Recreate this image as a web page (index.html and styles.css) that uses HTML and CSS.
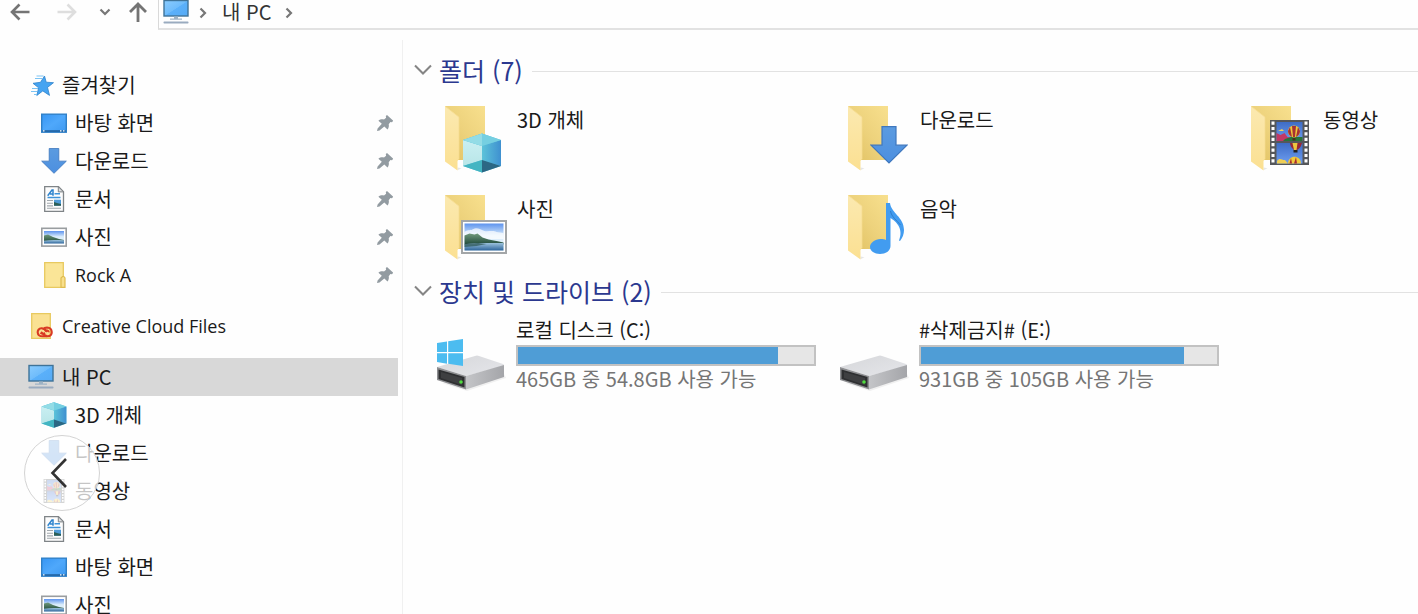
FILE: index.html
```html
<!DOCTYPE html>
<html lang="ko">
<head>
<meta charset="utf-8">
<title>내 PC</title>
<meta name="viewport" content="width=device-width, initial-scale=1">
<link rel="stylesheet" href="styles.css">
</head>
<body>
<svg class="sprite" aria-hidden="true">
  <defs>
    <linearGradient id="g-screen" x1="0" y1="0" x2="1" y2="1"><stop offset="0" stop-color="#8accff"/><stop offset=".5" stop-color="#6fbcfb"/><stop offset=".52" stop-color="#5ab0fa"/><stop offset="1" stop-color="#55aaf5"/></linearGradient>
    <linearGradient id="g-desk" x1="0" y1="0" x2="1" y2="1"><stop offset="0" stop-color="#3796f3"/><stop offset=".5" stop-color="#4fa8fb"/><stop offset="1" stop-color="#3c98f0"/></linearGradient>
    <linearGradient id="g-back" x1="0" y1="1" x2="1" y2="0"><stop offset="0" stop-color="#e0c060"/><stop offset=".5" stop-color="#edd27c"/><stop offset="1" stop-color="#f8e08e"/></linearGradient>
    <linearGradient id="g-flap" x1="0" y1="0" x2="0" y2="1"><stop offset="0" stop-color="#fbe9b0"/><stop offset="1" stop-color="#fbe092"/></linearGradient>
    <linearGradient id="g-arrow" x1="0" y1="0" x2="0" y2="1"><stop offset="0" stop-color="#5b9be0"/><stop offset="1" stop-color="#4c8fe0"/></linearGradient>
    <linearGradient id="g-sky" x1="0" y1="0" x2="0" y2="1"><stop offset="0" stop-color="#5d93ee"/><stop offset=".45" stop-color="#d9ecfb"/><stop offset="1" stop-color="#e8f4fb"/></linearGradient>
    <linearGradient id="g-sea" x1="0" y1="0" x2="0" y2="1"><stop offset="0" stop-color="#9cc3dd"/><stop offset="1" stop-color="#2e659b"/></linearGradient>
    <linearGradient id="g-hill" x1="0" y1="0" x2="0" y2="1"><stop offset="0" stop-color="#719a7c"/><stop offset="1" stop-color="#204a3c"/></linearGradient>
    <linearGradient id="g-cubel" x1="0" y1="0" x2="0" y2="1"><stop offset="0" stop-color="#c9eff2"/><stop offset="1" stop-color="#b9e6e8"/></linearGradient>
    <linearGradient id="g-cuber" x1="0" y1="0" x2="1" y2="0"><stop offset="0" stop-color="#5cc3d9"/><stop offset="1" stop-color="#3f90d0"/></linearGradient>
    <linearGradient id="g-drivetop" x1="0" y1="0" x2="1" y2="1"><stop offset="0" stop-color="#d6d7da"/><stop offset="1" stop-color="#e5e6ea"/></linearGradient>
    <linearGradient id="g-driveside" x1="0" y1="0" x2="1" y2="0"><stop offset="0" stop-color="#c4c5c8"/><stop offset="1" stop-color="#a4a5a9"/></linearGradient>
    <linearGradient id="g-film" x1="0" y1="0" x2="0" y2="1"><stop offset="0" stop-color="#3e6cc5"/><stop offset="1" stop-color="#6d9df0"/></linearGradient>
  </defs>

  <symbol id="i-pc" viewBox="0 0 26 26">
    <rect x="1" y="1.500" width="24" height="15.500" fill="url(#g-screen)" stroke="#3f7398" stroke-width="1.400"/>
    <path d="M11 17.500h4v2h4v1.200H7v-1.200h4z" fill="#9eb3c5"/>
    <rect x=".5" y="22.500" width="25" height="2" rx=".8" fill="#9aabbf"/>
  </symbol>
  <symbol id="i-star" viewBox="0 0 26 26">
    <path d="M16.500 4l1.700 6.200 7.300.5-6 4.700 2 8-6.700-4.500-6 4.600 1.800-7.700L5 11.300l7.500-1z" fill="#46a4f1" stroke="#2e83cc" stroke-width=".8"/>
    <path d="M8.500 4h7M7 6.500h7M4 16.500h6M3 19.500h6M6 22.500h3" stroke="#7cc3f3" stroke-width="1.200"/>
  </symbol>
  <symbol id="i-desktop" viewBox="0 0 26 26">
    <rect x=".7" y="4.200" width="24.600" height="18" fill="url(#g-desk)" stroke="#2f80c8" stroke-width="1.400"/>
    <path d="M1.400 21h23.200" stroke="#174f87" stroke-width="1.200"/>
    <path d="M2 20.800h1.500M19 20.800h1.500M22 20.800h1.500" stroke="#fff" stroke-width="1.300"/>
  </symbol>
  <symbol id="i-down" viewBox="0 0 38 38">
    <path d="M12 .7h14v18.500h11L19 37 1 19.200h11z" fill="url(#g-arrow)" stroke="#3f77bd" stroke-width="1.200"/>
  </symbol>
  <symbol id="i-doc" viewBox="0 0 26 26">
    <path d="M3.700.7h13.800l5 5v19.600H3.700z" fill="#fcfcfc" stroke="#7f8487" stroke-width="1.300"/>
    <path d="M17.300.7v5.200h5.200z" fill="#dcdfe1" stroke="#7f8487" stroke-width="1"/>
    <path d="M6.700 9.800L11 4h1v5.800M9 8h3" stroke="#2d83cd" stroke-width="1.500" fill="none"/>
    <path d="M13.500 7.800h5.500M6.500 11.500h13" stroke="#3e93d9" stroke-width="1.500"/>
    <path d="M6 14.500h6M6 17.200h6M6 19.900h6M6 22.300h14" stroke="#a1a8ad" stroke-width="1.100"/>
    <rect x="13" y="13.700" width="7" height="6" fill="#4f9bd8"/><path d="M13 16l3 1 4 1v1.700h-7z" fill="#2c5f57"/>
  </symbol>
  <symbol id="i-picture" viewBox="0 0 46 34">
    <rect x="1" y="1" width="44" height="32" fill="#fff" stroke="#a3a6a8" stroke-width="2"/>
    <rect x="3.500" y="3.500" width="39" height="27" fill="url(#g-sky)"/>
    <path d="M3.500 12c4-3 6-1 9-3s8 1 11 2 9-1 12 1l7 1v6h-39z" fill="#fff" opacity=".7"/>
    <path d="M3.500 15.500l5-2 5 1 3-1 5 4 6 2 8 1.500 7 1.500v2h-39z" fill="url(#g-hill)"/>
    <path d="M3.500 24.500c8-2 22-1.500 39-1.500v7.500h-39z" fill="url(#g-sea)"/>
    <path d="M3.500 24l14-1 8 1-10 2-12 1z" fill="#2a5350" opacity=".7"/>
  </symbol>
  <symbol id="i-smallpic" viewBox="0 0 26 26">
    <rect x=".8" y="4.300" width="24.400" height="17.800" fill="#fff" stroke="#999da0" stroke-width="1.600"/>
    <rect x="3" y="7" width="20" height="12.500" fill="url(#g-sky)"/>
    <path d="M3 11.500l4-1 5 2.500 6 2 5 1v2H3z" fill="url(#g-hill)"/>
    <path d="M3 16.700c7-1 13-.5 20-.5v3.300H3z" fill="url(#g-sea)"/>
  </symbol>
  <symbol id="i-folder" viewBox="0 0 26 26">
    <path d="M3.700.7h18.600v24.600H3.700z" fill="#fae597" stroke="#e8c95f" stroke-width="1.300"/>
    <path d="M20 25.300V16l1.500-1.500h1.300L24 16v9.300z" fill="#f8df8b" stroke="#dfbc4f" stroke-width="1.200"/>
  </symbol>
  <symbol id="i-cc" viewBox="0 0 26 26">
    <path d="M3.700.7h18.600v24.600H3.700z" fill="#fae193" stroke="#e8c95f" stroke-width="1.300"/>
    <g fill="none" stroke="#d93a24" stroke-width="2.100">
      <path d="M19 23.300h-4.500c-6 0-6.500-7.500-1-8 2.500-.2 4 1.700 5.500 3.500"/>
      <path d="M13 19c2 2 3.500 4.300 6.500 4.300 6 0 5.500-8.500-.5-8.800-2 0-3.300 1-4 2M12.500 19.700c1.500 2 3 1 4.500.2M17 18.300c1-1.500 4-.8 3.500 1"/>
    </g>
  </symbol>
  <symbol id="i-cube" viewBox="0 0 38 40">
    <path d="M19 .5L38 7v26L19 39.500 0 33V7z" fill="#5bc2da"/>
    <path d="M0 7l19 6v14L0 33z" fill="url(#g-cubel)"/>
    <path d="M38 7l-19 6v14l19 6z" fill="url(#g-cuber)"/>
    <path d="M0 33l19-6v12.500z" fill="#43b5c2"/>
    <path d="M38 33l-19-6v12.500z" fill="#2c6784"/>
    <path d="M19 .5L38 7l-19 6L0 7z" fill="#75cfe1"/><path d="M19 .5V13L0 7z" fill="#93dce6"/>
  </symbol>
  <symbol id="i-film" viewBox="0 0 39 45">
    <path d="M0 0h39v45H0z" fill="#55575a"/>
    <path d="M3 1.500v43M36 1.500v43" stroke="#fff" stroke-width="3" stroke-dasharray="3.200 2.200"/>
    <rect x="6.500" y="2" width="26" height="19" fill="url(#g-film)"/>
    <path d="M6.500 13l4 2 4-2 3 4 15 2v2h-26z" fill="#c23865"/>
    <path d="M15 19l6-2h11.500v4H13z" fill="#28743a"/>
    <circle cx="24" cy="11.500" r="6" fill="#f0c93c"/><path d="M22 6h4l-1 11h-2zM18 11c0 3 2 5 4 6l-2-10zM30 11c0 3-2 5-4 6l2-10z" fill="#a63233"/>
    <path d="M22.500 18h3v2.500h-3z" fill="#4b2c1e"/>
    <path d="M8 11l4-2 2 2z" fill="#f2d458"/>
    <rect x="6.500" y="23" width="26" height="20.500" fill="url(#g-film)"/>
    <path d="M20 23h12c-1 4-3 6-5 7h-3c-2-2-4-4-4-7z" fill="#9a2735"/><path d="M22.500 23h5l-1 7h-2.500z" fill="#eac63f"/>
    <path d="M23.500 30h4v2.500h-4z" fill="#222"/>
    <path d="M18 43.500c0-9 13-9 13 0z" fill="#efc93c"/><path d="M21 38l1 5.500h-2.500zM26 37l1 6.500h-3z" fill="#a92c30"/>
    <path d="M7 41c3-4 4-1 8-1l3 3.500H7z" fill="#f0cf55"/>
  </symbol>
  <symbol id="i-smallfilm" viewBox="0 0 26 26"><use href="#i-film" x="2" y="1" width="22" height="24"/></symbol>
  <symbol id="i-pin" viewBox="0 0 16 16">
    <path d="M10 0L16.200 5.700l-1.200 1.500-1.600-.2-1.700 2.200c.5 2.200-.1 4-1.200 5.300L7.300 11.400l-4.800 4L0 16l.6-2.400 4.200-4.800L1.400 5.700C3 4.200 5 3.900 7 4.400l2.100-1.600L8.800 1z" fill="#929ba1"/>
  </symbol>
  <symbol id="i-bigfolder" viewBox="0 0 70 70">
    <path d="M20.500 64.500l4 .7-4 2z" fill="#e6e6e6"/>
    <path d="M8 3h40v54H21z" fill="url(#g-back)"/>
    <path d="M8 3l14 11v42l-1.500 2v9.500L8 58.500z" fill="url(#g-flap)"/>
    <path d="M8.400 3.500L22 14.200v42" fill="none" stroke="#f6dc91" stroke-width=".8"/>
  </symbol>
  <symbol id="i-note" viewBox="0 0 36 52">
    <path d="M17 1h4c1 10 14 14 14 27 0 4-1.500 8-4 11l-1-.5c5-12-3-19-8.500-22.500V44c0 5-5 8-10.500 8S1 49 1 45s5-8 10.500-8c2.500 0 4 .4 5.500 1z" fill="#429cf0"/>
    <path d="M21.500 9c1 6 6 9 10 14" fill="none" stroke="#2e7dca" stroke-width="1"/>
  </symbol>
  <symbol id="i-drive" viewBox="0 0 70 70">
    <path d="M5 61l25 8 39-13-3-6z" fill="#f0f0f0"/>
    <path d="M0 45l38-11q2-.8 4 0l24 8q2 .8 0 2L29 54z" fill="url(#g-drivetop)"/>
    <path d="M29 54l38-11v12L29 67.500z" fill="url(#g-driveside)"/>
    <path d="M0 45l29 9v13.500L0 58z" fill="#8d8e91"/>
    <path d="M1.500 47.500L27.500 55v10.500l-26-8.500z" fill="#2e2f31"/>
    <path d="M4 50l21 6v7L4 56z" fill="#3e3f41"/>
    <circle cx="24" cy="60" r="1.800" fill="#4fdc3e"/>
  </symbol>
  <symbol id="i-windows" viewBox="0 0 26 27">
    <path d="M0 4l10-1.600V13H0zM11.200 2.200L26 0v13H11.200zM0 14.200h10v10.500L0 23zM11.200 14.200H26V27l-14.800-2.200z" fill="#4cbcf0"/>
  </symbol>
</svg>

<div class="window">
  <header class="toolbar">
    <button class="nav-btn" aria-label="뒤로"><svg width="20" height="20" viewBox="0 0 20 20"><path d="M19.500 10H2M9.500 2.500L2 10l7.500 7.500" fill="none" stroke="#747474" stroke-width="2.600"/></svg></button>
    <button class="nav-btn" aria-label="앞으로" disabled><svg width="20" height="20" viewBox="0 0 20 20"><path d="M.5 10H18M10.500 2.500L18 10l-7.500 7.500" fill="none" stroke="#dedede" stroke-width="2.600"/></svg></button>
    <button class="nav-btn" aria-label="최근 위치"><svg width="12" height="20" viewBox="0 0 12 20"><path d="M1.500 7.500L6 12l4.500-4.500" fill="none" stroke="#777" stroke-width="2.200"/></svg></button>
    <button class="nav-btn" aria-label="위로"><svg width="20" height="20" viewBox="0 0 20 20"><path d="M10 20V2M2 10l8-8 8 8" fill="none" stroke="#747474" stroke-width="2.800"/></svg></button>
    <nav class="address" aria-label="주소">
      <svg class="icon"><use href="#i-pc"/></svg>
      <svg class="crumb-sep" viewBox="0 0 8 12"><path d="M1.500 1.500L6 6l-4.500 4.500" fill="none" stroke="#777" stroke-width="2.200"/></svg>
      <a class="crumb" href="#">내 PC</a>
      <svg class="crumb-sep" viewBox="0 0 8 12"><path d="M1.500 1.500L6 6l-4.500 4.500" fill="none" stroke="#777" stroke-width="2.200"/></svg>
    </nav>
  </header>

  <div class="body">
    <nav class="sidebar" aria-label="탐색 창">
      <a class="row" href="#"><svg class="icon"><use href="#i-star"/></svg>즐겨찾기</a>
      <a class="row child" href="#"><svg class="icon"><use href="#i-desktop"/></svg>바탕 화면<svg class="pin"><use href="#i-pin"/></svg></a>
      <a class="row child" href="#"><svg class="icon"><use href="#i-down"/></svg>다운로드<svg class="pin"><use href="#i-pin"/></svg></a>
      <a class="row child" href="#"><svg class="icon"><use href="#i-doc"/></svg>문서<svg class="pin"><use href="#i-pin"/></svg></a>
      <a class="row child" href="#"><svg class="icon"><use href="#i-smallpic"/></svg>사진<svg class="pin"><use href="#i-pin"/></svg></a>
      <a class="row child latin" href="#"><svg class="icon"><use href="#i-folder"/></svg>Rock A<svg class="pin"><use href="#i-pin"/></svg></a>
      <a class="row spaced latin" href="#"><svg class="icon"><use href="#i-cc"/></svg>Creative Cloud Files</a>
      <a class="row spaced selected" href="#" aria-current="page"><svg class="icon"><use href="#i-pc"/></svg>내 PC</a>
      <a class="row child" href="#"><svg class="icon"><use href="#i-cube"/></svg>3D 개체</a>
      <a class="row child" href="#"><svg class="icon"><use href="#i-down"/></svg>다운로드</a>
      <a class="row child" href="#"><svg class="icon"><use href="#i-smallfilm"/></svg>동영상</a>
      <a class="row child" href="#"><svg class="icon"><use href="#i-doc"/></svg>문서</a>
      <a class="row child" href="#"><svg class="icon"><use href="#i-desktop"/></svg>바탕 화면</a>
      <a class="row child" href="#"><svg class="icon"><use href="#i-smallpic"/></svg>사진</a>
    </nav>

    <main class="content">
      <h2 class="group-title"><svg class="chevron" viewBox="0 0 18 12"><path d="M1 1.500l8 8 8-8" fill="none" stroke="#858585" stroke-width="2"/></svg>폴더 (7)</h2>
      <div class="tiles folders">
        <a class="tile" href="#"><svg class="tile-icon"><use href="#i-bigfolder"/><use href="#i-cube" x="26" y="30" width="38" height="40"/></svg><span class="name">3D 개체</span></a>
        <a class="tile" href="#"><svg class="tile-icon"><use href="#i-bigfolder"/><use href="#i-down" x="30" y="23" width="38" height="38"/></svg><span class="name">다운로드</span></a>
        <a class="tile" href="#"><svg class="tile-icon"><use href="#i-bigfolder"/><use href="#i-film" x="27" y="17" width="39" height="45"/></svg><span class="name">동영상</span></a>
        <a class="tile" href="#"><svg class="tile-icon"><use href="#i-bigfolder"/><use href="#i-picture" x="24" y="28" width="46" height="34"/></svg><span class="name">사진</span></a>
        <a class="tile" href="#"><svg class="tile-icon"><use href="#i-bigfolder"/><use href="#i-note" x="29" y="10" width="36" height="52"/></svg><span class="name">음악</span></a>
      </div>

      <h2 class="group-title"><svg class="chevron" viewBox="0 0 18 12"><path d="M1 1.500l8 8 8-8" fill="none" stroke="#858585" stroke-width="2"/></svg>장치 및 드라이브 (2)</h2>
      <div class="tiles drives">
        <a class="tile" href="#"><svg class="tile-icon"><use href="#i-drive"/><use href="#i-windows" x="0" y="17" width="26" height="27"/></svg>
          <span class="info"><span class="name">로컬 디스크 (C:)</span><span class="bar" role="img" aria-label="88% 사용"><span class="fill" style="width:88%"></span></span><span class="free">465GB 중 54.8GB 사용 가능</span></span></a>
        <a class="tile" href="#"><svg class="tile-icon"><use href="#i-drive"/></svg>
          <span class="info"><span class="name">#삭제금지# (E:)</span><span class="bar" role="img" aria-label="89% 사용"><span class="fill" style="width:89%"></span></span><span class="free">931GB 중 105GB 사용 가능</span></span></a>
      </div>
    </main>
  </div>

  <button class="prev" aria-label="이전"><svg width="18" height="32" viewBox="0 0 18 32"><path d="M16 2L2.500 16 16 30" fill="none" stroke="#333" stroke-width="2.600"/></svg></button>
</div>
</body>
</html>
```
FILE: styles.css
```css
* { box-sizing: border-box; }
body {
  margin: 0;
  background: #fefefe;
  color: #1a1a1a;
  font: 20px/26px "Noto Sans CJK KR", sans-serif;
}
a { color: inherit; text-decoration: none; }
svg { flex: none; display: block; }
.sprite { position: absolute; width: 0; height: 0; }
.window {
  position: relative;
  display: flex;
  flex-direction: column;
  height: 100vh;
  overflow: hidden;
}

/* Toolbar */
.toolbar { display: flex; height: 30px; flex: none; padding-left: 10px; }
.nav-btn {
  display: flex;
  height: 24px;
  align-items: center;
  margin: 0 22px 0 0;
  padding: 0;
  border: 0;
  background: none;
}
.nav-btn:nth-child(1) { margin-right: 27px; }
.nav-btn:nth-child(3) { margin-right: 17px; }
.nav-btn:nth-child(4) { margin-right: 10px; }
.address {
  display: flex;
  flex: 1;
  align-items: center;
  padding: 0 0 5px 4px;
  border-left: 1px solid #d9d9d9;
  border-bottom: 2px solid #e2e2e2;
}
.crumb-sep { width: 8px; height: 12px; margin: 2px 0 0 10px; }
.crumb { margin: 0 4px 0 15px; line-height: 22px; color: #333; }
.icon { width: 26px; height: 26px; }

/* Navigation pane */
.body { display: flex; flex: 1; min-height: 0; margin-top: 10px; }
.sidebar {
  flex: none;
  width: 403px;
  padding: 26px 4px 0 0;
  border-right: 1px solid #f0f0f0;
  overflow: hidden;
}
.row {
  display: flex;
  align-items: center;
  gap: 8px;
  height: 38px;
  padding: 0 5px 0 28px;
}
.row.child { padding-left: 41px; }
.row.spaced { margin-top: 13px; }
.row.selected { background: #d8d8d8; }
.latin { font-family: "Open Sans", "Noto Sans", sans-serif; font-size: 18px; }
.pin { width: 16px; height: 16px; margin-left: auto; }

/* Content */
.content { flex: 1; min-width: 0; padding: 12px 0 0 11px; overflow: hidden; }
.group-title {
  display: flex;
  align-items: center;
  gap: 7px;
  height: 36px;
  margin: 0;
  color: #2b388f;
  font-size: 25px;
  font-weight: 400;
  white-space: nowrap;
}
.group-title::after {
  content: "";
  flex: 1;
  height: 1px;
  margin: 2px 0 0 2px;
  background: #e2e2e2;
}
.chevron { width: 18px; height: 12px; }
.tiles { display: grid; grid-template-columns: repeat(3, 403px); padding-left: 23px; }
.folders { row-gap: 19px; padding-top: 15px; padding-bottom: 11px; }
.drives { padding-top: 8px; }
.tile { display: flex; gap: 9px; }
.tile-icon { width: 70px; height: 70px; }
.folders .name { padding: 4px 0 0 1px; }
.drives .tile-icon { margin-top: 5px; }
.info { display: flex; flex-direction: column; width: 300px; }
.bar {
  height: 21px;
  margin: 2px 0 0;
  border: 2px solid #c2c2c2;
  background: #e6e6e6;
}
.fill { display: block; height: 100%; background: #4f9dd6; }
.free { color: #757575; }

/* Floating previous button */
.prev {
  position: absolute;
  left: 24px;
  top: 435px;
  display: flex;
  align-items: center;
  width: 76px;
  height: 76px;
  padding: 0 0 0 25px;
  border: 1px solid #d4d4d4;
  border-radius: 50%;
  background: rgba(255, 255, 255, .75);
}
```
